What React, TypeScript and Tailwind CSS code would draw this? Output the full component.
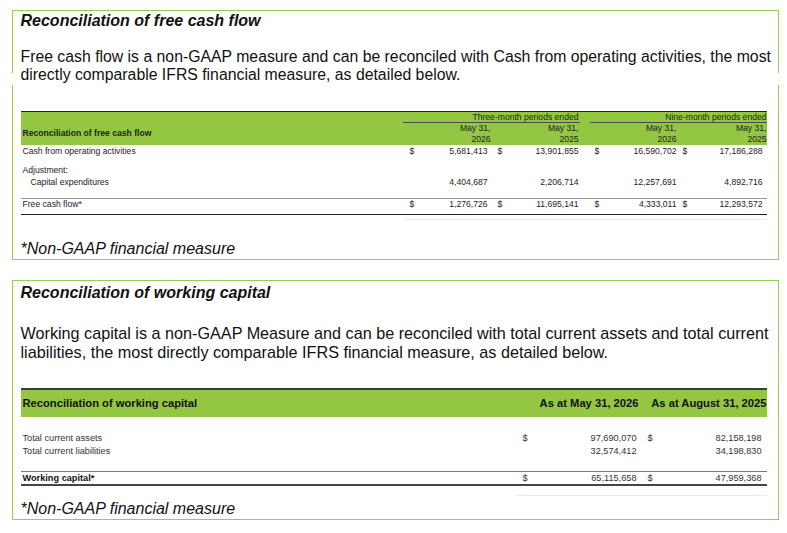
import React from 'react';

const font = "font-['Liberation_Sans',Arial,sans-serif]";

type Amount = { sign?: string; value: string };

function Money({ sign, value, className }: Amount & { className: string }) {
    return (
        <div className={`flex justify-between ${className}`}>
            <span>{sign ?? ''}</span>
            <span>{value}</span>
        </div>
    );
}

function FcfLine({ label, cells, indent, h }: { label: string; cells?: Amount[]; indent?: boolean; h: string }) {
    return (
        <div className={`grid grid-cols-[382px_89px_88px_10px_88px_89px] items-center ${h}`}>
            <div className={indent ? 'pl-[10px]' : 'pl-[2px]'}>{label}</div>
            {cells ? (
                <>
                    <Money {...cells[0]} className="pl-[7px] pr-[4px]" />
                    <Money {...cells[1]} className="pl-[6px] pr-[1px]" />
                    <div />
                    <Money {...cells[2]} className="pl-[5px] pr-[1px]" />
                    <Money {...cells[3]} className="pl-[5px] pr-[4px]" />
                </>
            ) : null}
        </div>
    );
}

function FreeCashTable() {
    return (
        <div className="w-[746px] text-[8.6px] leading-[11px] text-[#222]">
            <div className="border-t border-[#222] bg-[#93c741] pb-[0.5px]">
                <div className="grid grid-cols-[382px_89px_88px_10px_88px_89px] grid-rows-[11px_10.5px_11px]">
                    <div className="col-start-2 col-span-2 border-b border-[#4a4a4a] pr-[1px] text-right">Three-month periods ended</div>
                    <div className="col-start-5 col-span-2 border-b border-[#4a4a4a] text-right">Nine-month periods ended</div>
                    <div className="col-start-1 row-start-2 row-span-2 self-center pl-[2px] font-bold">Reconciliation of free cash flow</div>
                    <div className="col-start-2 row-start-2 pr-[1px] text-right">May 31,</div>
                    <div className="col-start-3 row-start-2 pr-[1px] text-right">May 31,</div>
                    <div className="col-start-5 row-start-2 pr-[1px] text-right">May 31,</div>
                    <div className="col-start-6 row-start-2 text-right">May 31,</div>
                    <div className="col-start-2 row-start-3 pr-[1px] text-right">2026</div>
                    <div className="col-start-3 row-start-3 pr-[1px] text-right">2025</div>
                    <div className="col-start-5 row-start-3 pr-[1px] text-right">2026</div>
                    <div className="col-start-6 row-start-3 text-right">2025</div>
                </div>
            </div>
            <FcfLine h="h-[12px]" label="Cash from operating activities" cells={[
                { sign: '$', value: '5,681,413' }, { sign: '$', value: '13,901,855' },
                { sign: '$', value: '16,590,702' }, { sign: '$', value: '17,186,288' },
            ]} />
            <div className="h-[7.5px]" />
            <FcfLine h="h-[11.5px]" label="Adjustment:" />
            <FcfLine h="h-[12px]" indent label="Capital expenditures" cells={[
                { value: '4,404,687' }, { value: '2,206,714' }, { value: '12,257,691' }, { value: '4,892,716' },
            ]} />
            <div className="h-[10px]" />
            <div className="border-t border-b-[1.5px] border-t-[#9a9a9a] border-b-[#222] pb-[4px]">
                <FcfLine h="h-[11px]" label="Free cash flow*" cells={[
                    { sign: '$', value: '1,276,726' }, { sign: '$', value: '11,695,141' },
                    { sign: '$', value: '4,333,011' }, { sign: '$', value: '12,293,572' },
                ]} />
            </div>
            <div className="mt-[4px] ml-[382px] h-px bg-[#e3f2dc]" />
        </div>
    );
}

function WcLine({ label, a, b, bold, h }: { label: string; a: Amount; b: Amount; bold?: boolean; h: string }) {
    return (
        <div className={`grid grid-cols-[495px_125px_126px] items-center ${h}`}>
            <div className={`pl-[2px] ${bold ? 'font-bold text-[#111]' : ''}`}>{label}</div>
            <Money {...a} className="pl-[7px] pr-[4px]" />
            <Money {...b} className="pl-[7px] pr-[5px]" />
        </div>
    );
}

function WorkingCapitalTable() {
    return (
        <div className="w-[746px] text-[9.2px] leading-[13px] text-[#333]">
            <div className="grid h-[29px] grid-cols-[495px_125px_126px] items-center border-t-2 border-[#3d3d3d] bg-[#93c741] text-[11.2px] font-bold text-[#111]">
                <div className="pl-[2px]">Reconciliation of working capital</div>
                <div className="whitespace-nowrap pr-[2px] text-right">As at May 31, 2026</div>
                <div className="whitespace-nowrap text-right">As at August 31, 2025</div>
            </div>
            <div className="h-[14.5px]" />
            <WcLine h="h-[13px]" label="Total current assets" a={{ sign: '$', value: '97,690,070' }} b={{ sign: '$', value: '82,158,198' }} />
            <WcLine h="h-[13px]" label="Total current liabilities" a={{ value: '32,574,412' }} b={{ value: '34,198,830' }} />
            <div className="h-[13px]" />
            <div className="border-t border-b-2 border-t-[#7a7a7a] border-b-[#444]">
                <WcLine h="h-[12.5px]" bold label="Working capital*" a={{ sign: '$', value: '65,115,658' }} b={{ sign: '$', value: '47,959,368' }} />
            </div>
            <div className="mt-[9px] ml-[495px] h-px bg-[#e3f2dc]" />
        </div>
    );
}

export default function App() {
    return (
        <div className={`${font} min-h-[533px] w-[787px] bg-white pl-[12px] pt-[10px] text-[#111]`}>
            {/* free cash flow */}
            <div className="w-[767px]">
                <div className="h-[63px] border-x-[1.5px] border-t-[1.5px] border-[#92d050] pl-[7.5px] pt-[1px]">
                    <h2 className="text-[16px] font-bold italic leading-[18px]">Reconciliation of free cash flow</h2>
                    <p className="mt-[18px] text-[15.8px] leading-[18.4px]">
                        Free cash flow is a non-GAAP measure and can be reconciled with Cash from operating activities, the most directly comparable IFRS financial measure, as detailed below.
                    </p>
                </div>
                <div className="h-[12px]" />
                <div className="border-x-[1.5px] border-b-[1.5px] border-[#92d050] px-[7.5px] pb-[1px] pt-[26px]">
                    <FreeCashTable />
                    <p className="mt-[20px] text-[16px] italic leading-[18.4px]">*Non-GAAP financial measure</p>
                </div>
            </div>

            {/* working capital */}
            <div className="mt-[19.5px] w-[767px] border-[1.5px] border-[#92d050] pl-[7.5px] pb-[0.5px] pt-[3.5px]">
                <h2 className="text-[16px] font-bold italic leading-[18px]">Reconciliation of working capital</h2>
                <p className="mt-[22px] text-[16.2px] leading-[18.7px]">
                    Working capital is a non-GAAP Measure and can be reconciled with total current assets and total current liabilities, the most directly comparable IFRS financial measure, as detailed below.
                </p>
                <div className="mt-[26.5px]">
                    <WorkingCapitalTable />
                </div>
                <p className="mt-[4px] text-[16px] italic leading-[18.4px]">*Non-GAAP financial measure</p>
            </div>
        </div>
    );
}
